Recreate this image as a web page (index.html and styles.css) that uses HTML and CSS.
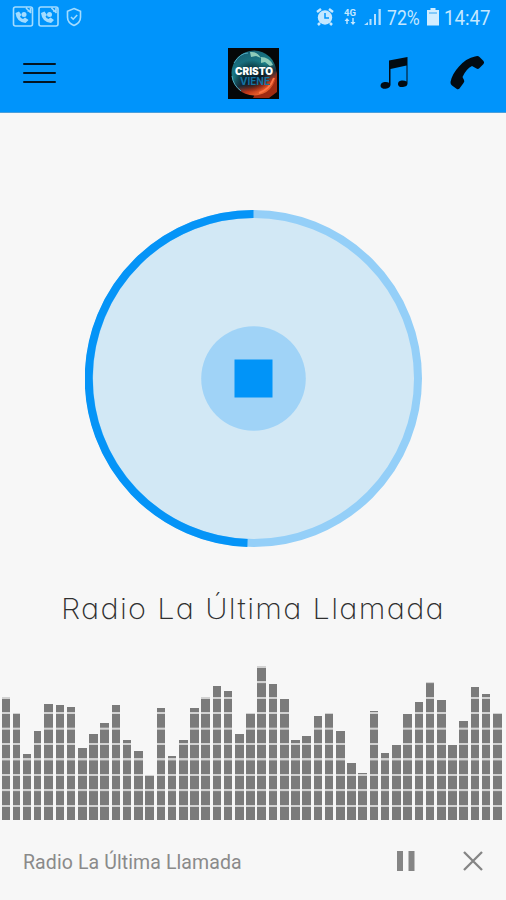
FILE: index.html
```html
<!DOCTYPE html>
<html lang="es">
<head>
<meta charset="utf-8">
<title>Radio La Última Llamada</title>
<link rel="stylesheet" href="styles.css">
</head>
<body>
<header class="top">
  <div class="status">
    <svg class="notif" width="72" height="24" viewBox="0 0 72 24" fill="none" stroke="#a3dcff" stroke-width="1.600">
      <g id="call"><path d="M13 2H3.500Q1.500 2 1.500 4v15q0 2 2 2h15q2 0 2-2V9M13 2h5.500q2 0 2 2v5M14 3l5 5M15.500 6h3V3"/><path d="M3.500 8q1 9 10 10l3-3-3.500-2.500-2 1.500Q8.500 13 8 11.500l1.500-1.500L7 6.500z" fill="#a3dcff" stroke="none"/><circle cx="12" cy="9.500" r="2.500" fill="#a3dcff" stroke="none"/></g>
      <use href="#call" x="25.500"/>
      <path d="M62 3.500l6.500 2.700v6q0 5.500-6.500 8.300-6.500-2.800-6.500-8.300v-6zM59 12l2.200 2.200 4-4.200"/>
    </svg>
    <div class="sys">
      <svg width="18" height="20" viewBox="0 0 18 20"><circle cx="9" cy="10.500" r="7.200" fill="#c5e8ff"/><path d="M1 5l4-3M17 5l-4-3M4 16l-2 2M14 16l2 2" stroke="#c5e8ff" stroke-width="2.500"/><path d="M9 6v5h4" fill="none" stroke="#0094fb" stroke-width="1.500"/></svg>
      <span class="net">4G<svg width="12" height="7" viewBox="0 0 12 7" fill="#c5e8ff"><path d="M3 0l2.500 3h-1.800v3H2.300V3H.5zM9 7L6.500 4h1.800V0h1.400v4h1.800z"/></svg></span>
      <svg class="signal" width="18" height="18" viewBox="0 0 18 18" fill="#b5e0ff"><path d="M0 17l4-3v3zM5.500 11h2v6h-2zM10 6h2v11h-2zM14.500 1h2.300v16h-2.300z"/></svg>
      <span class="pct">72%</span>
      <svg class="battery" width="12" height="18" viewBox="0 0 12 18"><path d="M3.500 0h5v2H12v15.500H0V2h3.500z" fill="#d2edff"/><path d="M2 5h8" stroke="#66bcf8" stroke-width="1.500"/></svg>
      <span class="time">14:47</span>
    </div>
  </div>
  <nav class="bar">
    <svg class="menu" width="34" height="24" viewBox="0 0 34 24"><path d="M1 3h31M1 12h31M1 21h31" stroke="#031522" stroke-width="2" stroke-linecap="round"/></svg>
    <svg class="logo" width="51" height="51" viewBox="0 0 51 51">
      <defs>
        <linearGradient id="globe" x1=".2" y1="0" x2=".65" y2="1"><stop offset="0" stop-color="#175c73"/><stop offset=".45" stop-color="#1a7e86"/><stop offset=".65" stop-color="#172f3e"/><stop offset=".82" stop-color="#bd3518"/><stop offset="1" stop-color="#f36b32"/></linearGradient>
        <radialGradient id="shade"><stop offset=".5" stop-color="#021019" stop-opacity=".65"/><stop offset="1" stop-color="#021019" stop-opacity="0"/></radialGradient>
      </defs>
      <path d="M0 0h51v51H0z" fill="#050708"/>
      <path d="M28 44q15-4 21-21v21l-8 6H25z" fill="#9e2a12"/>
      <circle cx="26" cy="25" r="22.500" fill="url(#globe)"/>
      <ellipse cx="24" cy="28" rx="19" ry="16" fill="url(#shade)"/>
      <path d="M22 4q7-1 11 6l-5-2-5 1zM33 9q8 0 12 8l-3 1-5-4-4 1z" fill="#8dccb9"/>
      <path d="M6 15Q12 5 20 5M4 28q1 9 9 15" stroke="#4faac0" fill="none"/>
      <path d="M31 45q11-4 15-15" stroke="#ff7544" stroke-width="2" fill="none"/>
      <text class="logo-a" x="7" y="26.500" textLength="38" lengthAdjust="spacingAndGlyphs">CRISTO</text>
      <text class="logo-b" x="12" y="36.500" textLength="30" lengthAdjust="spacingAndGlyphs">VIENE</text>
    </svg>
    <div class="actions">
      <svg width="28" height="34" viewBox="0 0 28 34"><path d="M9 4.500L27.500 1v26.500q0 3-4.500 3.500-4.500.5-5-2.500-.3-3.300 3.500-4 3-.3 5 1V9.500L10.500 13v16q-.5 3.300-4.800 3.800-4.700.2-5.200-2.800 0-3.300 4-4 3-.3 4.500.7z"/></svg>
      <svg class="phone" width="36" height="36" viewBox="0 0 36 36"><path d="M1.500 27Q3 19 10 11.500 17.500 3 26 1.500q3-1 4.500.5l4 4q1.200 1.400 0 3l-4 4q-1.500 1.500-3 .5l-4.500-2.500q-6 3-9.500 11l1.500 3q.8 1.500-.5 3l-4 5.500q-1.500 1.500-3 .2L3 30.500Q1.300 29 1.500 27z"/></svg>
    </div>
  </nav>
</header>
<main>
  <svg class="player" width="338" height="338" viewBox="0 0 338 338">
    <circle cx="168.500" cy="168.500" r="164.500" fill="#d2e8f5" stroke="#94cff8" stroke-width="8"/>
    <path d="M168.500 4A164.500 164.500 0 0 0 162.500 332.900" fill="none" stroke="#0594f7" stroke-width="8"/>
    <circle cx="168.500" cy="168.500" r="52.300" fill="#a0d3f7"/>
    <path d="M149.500 149.500h38v38h-38z" fill="#0194f8"/>
  </svg>
  <svg class="title" width="400" height="48" viewBox="0 0 400 48"><text x="8" y="35" textLength="384" lengthAdjust="spacingAndGlyphs">Radio La Última Llamada</text></svg>
  <div class="eq" id="eq"></div>
</main>
<footer>
  <span class="now">Radio La Última Llamada</span>
  <svg class="pause" width="18" height="20" viewBox="0 0 18 20" fill="#858585"><path d="M0 0h6v20H0zM11.500 0h6v20h-6z"/></svg>
  <svg class="close" width="20" height="20" viewBox="0 0 20 20"><path d="M1 1l18 18M19 1L1 19" stroke="#858585" stroke-width="2.300"/></svg>
</footer>
<script src="bars.js"></script>
</body>
</html>
```
FILE: styles.css
```css
* { box-sizing: border-box; }
body {
  margin: 0;
  width: 506px;
  height: 900px;
  display: flex;
  flex-direction: column;
  overflow: hidden;
  background: #f7f7f7;
  font-family: Roboto, sans-serif;
}
svg { display: block; flex: none; }
.top { height: 113px; background: #0094fb; border-bottom: 1px solid #4b9fdb; }
.status { height: 34px; display: flex; justify-content: space-between; padding: 5px 14px 0 12px; color: #c5e8ff; }
.sys { display: flex; align-items: flex-start; font-size: 20px; line-height: 24px; }
.sys > svg:first-child { margin-top: 2px; }
.net { width: 15px; margin: 4px 0 0 10px; font-size: 9.5px; font-weight: 700; line-height: 8px; }
.net svg { margin-top: 1px; }
.signal { margin: 3px 0 0 5px; }
.pct { width: 34px; margin: 1px 0 0 5px; white-space: nowrap; font-size: 21px; transform: scaleX(.84); transform-origin: left; }
.battery { margin: 3px 0 0 6px; }
.time { width: 48px; margin: 1px 0 0 5px; font-size: 21px; transform: scaleX(.89); transform-origin: left; }
.bar { height: 78px; display: grid; grid-template-columns: 205px 51px 1fr; align-items: center; padding: 0 21px 0 23px; }
.logo-a { font: 900 10px Inter, sans-serif; fill: #fff; }
.logo-b { font: 700 10px Inter, sans-serif; fill: #1572a2; }
.actions { display: flex; justify-content: flex-end; gap: 41px; align-items: center; }
.actions svg { fill: #020b12; }
main { height: 708px; display: flex; flex-direction: column; align-items: center; }
.player { margin: 97px 0 0 1px; }
.title { margin-top: 36px; }
.title text { font: 250 28.5px Inter, sans-serif; font-feature-settings: "cv11"; letter-spacing: 1.2px; fill: #303030; }
.eq {
  width: 506px;
  height: 160px;
  margin-top: 28px;
  padding-left: 2px;
  display: flex;
  align-items: flex-end;
}
.eq span {
  flex: none;
  width: 8.6px;
  margin-right: 2.64px;
  background: repeating-linear-gradient(to top, #7b7b7b 0 13px, #d2d2d2 13.5px 15.2px, #7b7b7b 15.43px);
}
.eq span:nth-child(-n+4) { width: 7.7px; margin-right: 2.9px; }
footer { height: 79px; display: flex; align-items: center; padding: 1px 23px 0; }
.now { width: 374px; padding-top: 2px; color: #8a8a8a; font-size: 19.5px; letter-spacing: .1px; white-space: nowrap; }
.close { margin-left: 48px; }
```
FILE: bars.js
```js
const heights = [123, 107, 66, 89, 116, 115, 113, 72, 86, 97, 115, 80, 69, 45, 112, 64, 80, 112, 123, 134, 129, 86, 107, 154, 136, 121, 80, 84, 104, 107, 89, 57, 47, 109, 67, 75, 106, 118, 138, 120, 75, 99, 133, 126, 107];
const eq = document.getElementById('eq');
for (const h of heights) {
  const bar = document.createElement('span');
  bar.style.height = h + 'px';
  eq.appendChild(bar);
}
```
